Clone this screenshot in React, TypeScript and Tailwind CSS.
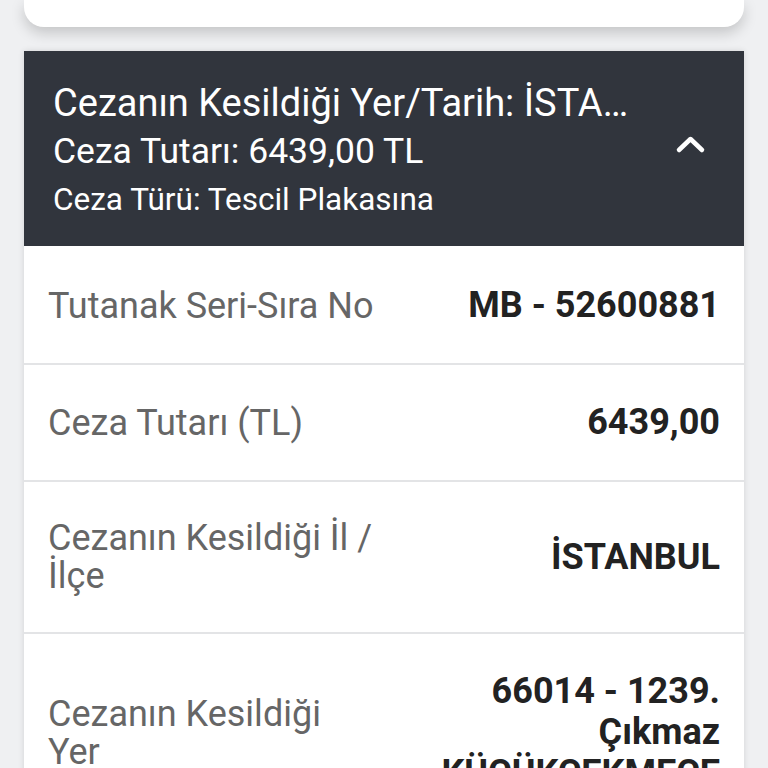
import React from 'react';

interface Row {
  label: string;
  value: string;
}

const rows: Row[] = [
  { label: 'Tutanak Seri-Sıra No', value: 'MB - 52600881' },
  { label: 'Ceza Tutarı (TL)', value: '6439,00' },
  { label: 'Cezanın Kesildiği İl / İlçe', value: 'İSTANBUL' },
  { label: 'Cezanın Kesildiği Yer', value: '66014 - 1239. Çıkmaz KÜÇÜKÇEKMECE' },
];

const ChevronUp: React.FC = () => (
  <svg width="32" height="20" viewBox="0 0 32 20" fill="none" className="-mt-[9px]">
    <path d="M5 16 L16.5 5 L28 16" stroke="#ffffff" strokeWidth="4.5" strokeLinecap="round" strokeLinejoin="round" />
  </svg>
);

export default function App() {
  return (
    <div
      className="min-h-screen bg-[#eff0f2] px-6 overflow-hidden"
      style={{ fontFamily: 'Roboto, "Liberation Sans", sans-serif' }}
    >
      {/* previous card, only its bottom edge is visible */}
      <div className="h-[27px] bg-white rounded-b-[20px] shadow-[0_6px_14px_rgba(0,0,0,0.18)]" />

      <div className="mt-6 shadow-[0_0_6px_rgba(0,0,0,0.12)]">
        {/* accordion header */}
        <div className="h-[195px] bg-[#31353d] pl-[29px] pr-[38px] flex items-center justify-between text-white">
          <div className="min-w-0 flex-1 pr-[22px] pt-[4px]">
            <div className="text-[38px] leading-[48px] truncate">Cezanın Kesildiği Yer/Tarih: İSTANBUL 12.03.2024</div>
            <div className="text-[35.5px] leading-[49px]">Ceza Tutarı: 6439,00 TL</div>
            <div className="text-[31.5px] leading-[47px]">Ceza Türü: Tescil Plakasına</div>
          </div>
          <ChevronUp />
        </div>

        {/* detail rows */}
        <div className="bg-white">
          {rows.map((row, i) => (
            <div
              key={i}
              className={`flex items-center justify-between px-6 py-[37px] border-t-2 ${i > 0 ? 'border-[#e3e4e6]' : 'border-white'}`}
            >
              <div className="w-1/2 pr-2 text-[36px] leading-[38px] text-[#666666]">{row.label}</div>
              <div className="w-1/2 text-right text-[36px] leading-[41px] font-bold text-[#222222]">{row.value}</div>
            </div>
          ))}
        </div>
      </div>
    </div>
  );
}
